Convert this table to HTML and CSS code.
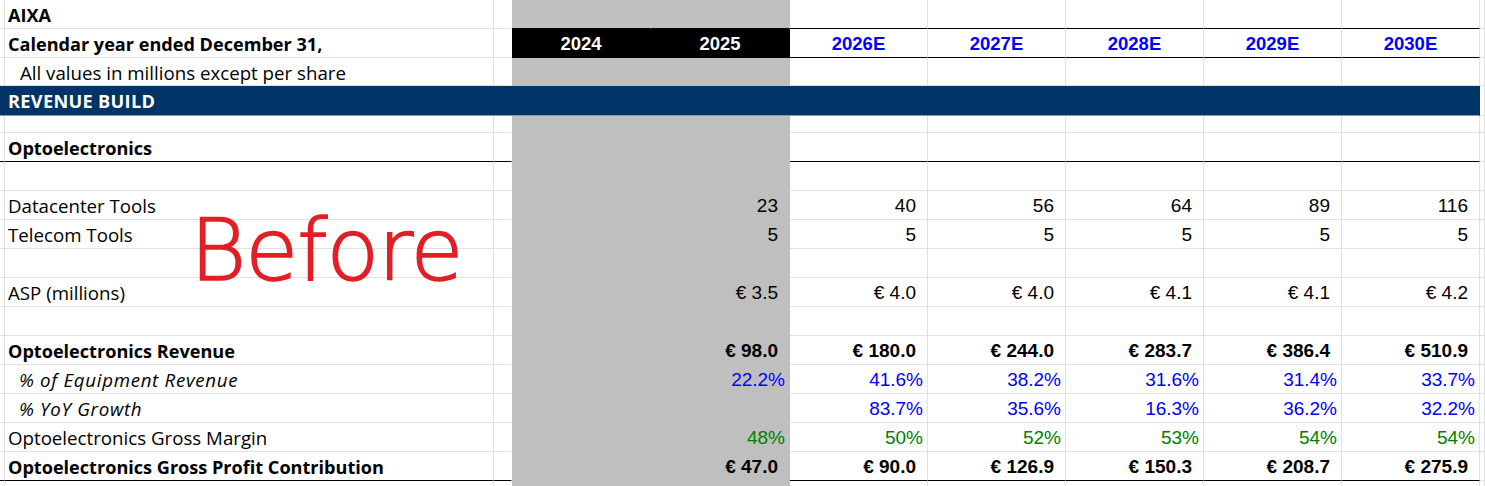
FILE: index.html
```html
<!DOCTYPE html>
<html>
<head>
<meta charset="utf-8">
<link rel="stylesheet" href="styles.css">
</head>
<body>
<div class="sheet">
  <div class="row r1">
    <div></div><div class="lbl b">AIXA</div><div class="sp"></div>
    <div class="g hb"></div><div class="g hb"></div>
    <div class="hb"></div><div class="hb"></div><div class="hb"></div><div class="hb"></div><div class="hb"></div><div></div>
  </div>
  <div class="row r2">
    <div></div><div class="lbl b">Calendar year ended December 31,</div><div class="sp"></div>
    <div class="hdr dark">2024</div><div class="hdr dark">2025</div>
    <div class="hdr est">2026E</div><div class="hdr est">2027E</div><div class="hdr est">2028E</div><div class="hdr est">2029E</div><div class="hdr est">2030E</div><div></div>
  </div>
  <div class="row r3">
    <div></div><div class="lbl ind">All values in millions except per share</div><div class="sp"></div>
    <div class="g"></div><div class="g"></div>
    <div></div><div></div><div></div><div></div><div></div><div></div>
  </div>
  <div class="row r4">
    <div class="band">REVENUE BUILD</div><div></div>
  </div>
  <div class="row r5">
    <div></div><div></div><div class="sp"></div>
    <div class="g"></div><div class="g"></div>
    <div></div><div></div><div></div><div></div><div></div><div></div>
  </div>
  <div class="row rule">
    <div></div><div class="lbl b">Optoelectronics</div><div class="sp"></div>
    <div class="g"></div><div class="g"></div>
    <div></div><div></div><div></div><div></div><div></div><div class="end"></div>
  </div>
  <div class="row">
    <div></div><div></div><div class="sp"></div>
    <div class="g"></div><div class="g"></div>
    <div></div><div></div><div></div><div></div><div></div><div></div>
  </div>
  <div class="row">
    <div></div><div class="lbl">Datacenter Tools</div><div class="sp"></div>
    <div class="g"></div><div class="g num">23</div>
    <div class="num">40</div><div class="num">56</div><div class="num">64</div><div class="num">89</div><div class="num">116</div><div></div>
  </div>
  <div class="row">
    <div></div><div class="lbl">Telecom Tools</div><div class="sp"></div>
    <div class="g"></div><div class="g num">5</div>
    <div class="num">5</div><div class="num">5</div><div class="num">5</div><div class="num">5</div><div class="num">5</div><div></div>
  </div>
  <div class="row">
    <div></div><div></div><div class="sp"></div>
    <div class="g"></div><div class="g"></div>
    <div></div><div></div><div></div><div></div><div></div><div></div>
  </div>
  <div class="row">
    <div></div><div class="lbl">ASP (millions)</div><div class="sp"></div>
    <div class="g"></div><div class="g num">€ 3.5</div>
    <div class="num">€ 4.0</div><div class="num">€ 4.0</div><div class="num">€ 4.1</div><div class="num">€ 4.1</div><div class="num">€ 4.2</div><div></div>
  </div>
  <div class="row">
    <div></div><div></div><div class="sp"></div>
    <div class="g"></div><div class="g"></div>
    <div></div><div></div><div></div><div></div><div></div><div></div>
  </div>
  <div class="row">
    <div></div><div class="lbl b">Optoelectronics Revenue</div><div class="sp"></div>
    <div class="g"></div><div class="g num b">€ 98.0</div>
    <div class="num b">€ 180.0</div><div class="num b">€ 244.0</div><div class="num b">€ 283.7</div><div class="num b">€ 386.4</div><div class="num b">€ 510.9</div><div></div>
  </div>
  <div class="row">
    <div></div><div class="lbl ind it">% of Equipment Revenue</div><div class="sp"></div>
    <div class="g"></div><div class="g num pct blue">22.2%</div>
    <div class="num pct blue">41.6%</div><div class="num pct blue">38.2%</div><div class="num pct blue">31.6%</div><div class="num pct blue">31.4%</div><div class="num pct blue">33.7%</div><div></div>
  </div>
  <div class="row">
    <div></div><div class="lbl ind it">% YoY Growth</div><div class="sp"></div>
    <div class="g"></div><div class="g"></div>
    <div class="num pct blue">83.7%</div><div class="num pct blue">35.6%</div><div class="num pct blue">16.3%</div><div class="num pct blue">36.2%</div><div class="num pct blue">32.2%</div><div></div>
  </div>
  <div class="row">
    <div></div><div class="lbl">Optoelectronics Gross Margin</div><div class="sp"></div>
    <div class="g"></div><div class="g num pct green">48%</div>
    <div class="num pct green">50%</div><div class="num pct green">52%</div><div class="num pct green">53%</div><div class="num pct green">54%</div><div class="num pct green">54%</div><div></div>
  </div>
  <div class="row rule">
    <div></div><div class="lbl b">Optoelectronics Gross Profit Contribution</div><div class="sp"></div>
    <div class="g"></div><div class="g num b">€ 47.0</div>
    <div class="num b">€ 90.0</div><div class="num b">€ 126.9</div><div class="num b">€ 150.3</div><div class="num b">€ 208.7</div><div class="num b">€ 275.9</div><div class="end"></div>
  </div>
  <div class="row">
    <div></div><div></div><div class="sp"></div>
    <div class="g"></div><div class="g"></div>
    <div></div><div></div><div></div><div></div><div></div><div></div>
  </div>
  <div class="note">Before</div>
</div>
</body>
</html>
```

FILE: styles.css
```css
html, body {
  margin: 0;
  padding: 0;
  background: #ffffff;
}

.sheet {
  position: relative;
  width: 1485px;
  height: 486px;
  overflow: hidden;
  font-family: "Open Sans", "Liberation Sans", sans-serif;
  color: #000000;
}

.row {
  display: grid;
  grid-template-columns: 5px 489px 18px 139px 139px 138px 138px 138px 138px 138px 1fr;
  height: 29px;
}

.row > div {
  box-sizing: border-box;
  border-right: 1px solid #e1e1e1;
  border-bottom: 1px solid #e1e1e1;
  display: flex;
  align-items: center;
  white-space: nowrap;
  min-width: 0;
}

.r3 { height: 28px; }
.r4 { height: 30px; }
.r5 { height: 17px; }

.row > .sp { border-right-color: #ffffff; }

.row > .g {
  background: #bfbfbf;
  border-right-color: #bfbfbf;
  border-bottom-color: #bfbfbf;
}

.row > .hb { border-bottom-color: #000000; }

.lbl {
  padding-left: 3px;
  font-size: 18.7px;
  padding-top: 1px;
}

.ind { padding-left: 15px; }
.lbl.b { font-size: 18.1px; letter-spacing: 0; }
.b { font-weight: 700; }
.lbl.it { font-style: italic; font-size: 18.7px; letter-spacing: 0.7px; padding-left: 14px; }

.num {
  justify-content: flex-end;
  padding-right: 11px;
  font-family: "Liberation Sans", Arial, sans-serif;
  font-size: 19px;
  padding-top: 2px;
}

.row > .pct { padding-right: 4px; }
.blue { color: #0000ff; }
.green { color: #008000; }

.hdr {
  justify-content: center;
  font-family: "Liberation Sans", Arial, sans-serif;
  font-weight: 700;
  font-size: 18.5px;
  padding-top: 2px;
}

.row > .dark {
  background: #000000;
  color: #ffffff;
  border-right-color: #000000;
  border-bottom-color: #000000;
}

.row > .est {
  color: #0000ff;
  border-bottom-color: #000000;
}

.row > .band {
  grid-column: 1 / 11;
  background: #003366;
  color: #ffffff;
  font-weight: 700;
  font-size: 18.2px;
  letter-spacing: 0.3px;
  padding-left: 8px;
  padding-top: 1px;
  border-right-color: #003366;
  border-bottom-color: #8a9bb0;
}

.rule > div { border-bottom-color: #000000; }
.rule > .end { border-bottom-color: #e1e1e1; }

.note {
  position: absolute;
  left: 190px;
  top: 207px;
  color: #e21f26;
  font-family: "DejaVu Sans", sans-serif;
  font-weight: 200;
  font-size: 86px;
  line-height: 1;
  letter-spacing: -1px;
  -webkit-text-stroke: 1.6px #e21f26;
}
```
